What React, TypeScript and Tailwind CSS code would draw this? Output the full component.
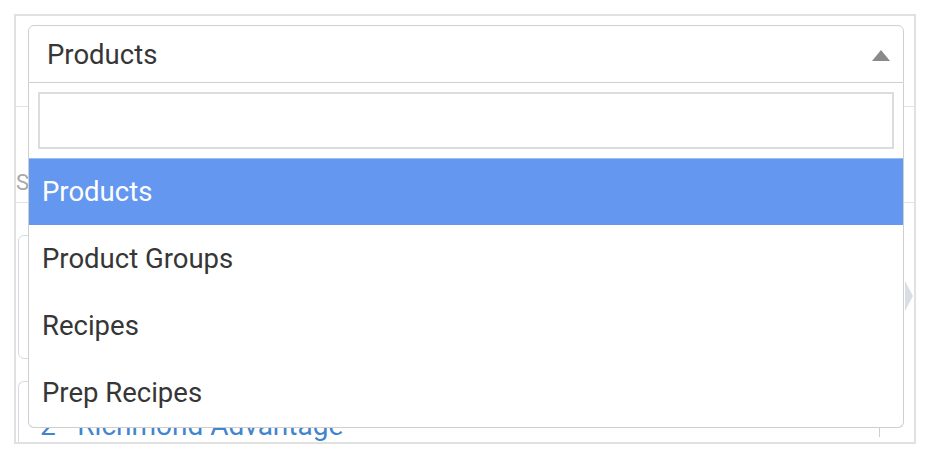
import React from "react";

const options = ["Products", "Product Groups", "Recipes", "Prep Recipes"];

export default function App() {
  return (
    <div
      className="w-[928px] h-[460px] bg-white pt-[14px] pl-[14px]"
      style={{ fontFamily: "Roboto, 'Noto Sans', Arial, sans-serif" }}
    >
      <div className="relative w-[902px] h-[430px] border-2 border-[#e1e1e1] bg-white overflow-hidden">
        {/* Background page content */}
        <div className="flex flex-col">
          <div className="h-[91px] border-b border-[#e3e3e3]" />
          <div className="h-[96px] flex items-end pb-[8px] border-b border-[#e3e3e3]">
            <span className="text-[22px] leading-none text-[#a8a8a8]">S</span>
          </div>
          <div className="flex items-start">
            <div className="mt-[32px] ml-[2px] w-[870px] h-[124px] rounded-[6px] border border-[#d5dbe5]" />
            <div className="mt-[78px] ml-[17px] w-0 h-0 border-y-[15px] border-y-transparent border-l-[8px] border-l-[#d9dde4]" />
          </div>
          <div className="mt-[22px] ml-[2px] w-[870px] h-[80px] rounded-l-[6px] border-l border-t border-[#d5dbe5] flex flex-col pt-[30px]">
            <span className="ml-[21px] text-[28px] leading-none text-[#4285cc] whitespace-nowrap">
              2 - Richmond Advantage
            </span>
          </div>
        </div>
        <div className="absolute left-[863px] top-[412px] w-[1px] h-[9px] bg-[#cfcfcf]" />

        {/* Dropdown overlay */}
        <div className="absolute left-[12px] top-[9px] w-[876px] text-[#363636]">
          <div className="h-[58px] border border-[#cfcfcf] rounded-t-[6px] bg-white flex items-center justify-between pl-[18px] pr-[13px]">
            <span className="text-[27.5px] leading-none translate-y-[1px]">Products</span>
            <span className="w-0 h-0 border-x-[9px] border-x-transparent border-b-[11px] border-b-[#8a8a8a] translate-y-[1px]" />
          </div>
          <div className="border-x border-b border-[#cfcfcf] rounded-b-[6px] bg-white pb-[1px]">
            <div className="pt-[9px] pb-[9px] px-[9px]">
              <div className="h-[57px] border-2 border-[#dcdcdc] bg-white" />
            </div>
            {options.map((o, i) => (
              <div
                key={o}
                className={
                  i === 0
                    ? "h-[67px] flex items-center pl-[13px] bg-[#6497f0] text-white border-t border-[#9bbcf5]"
                    : "h-[67px] flex items-center pl-[13px]"
                }
              >
                <span className="text-[27.5px] leading-none">{o}</span>
              </div>
            ))}
          </div>
        </div>
      </div>
    </div>
  );
}
